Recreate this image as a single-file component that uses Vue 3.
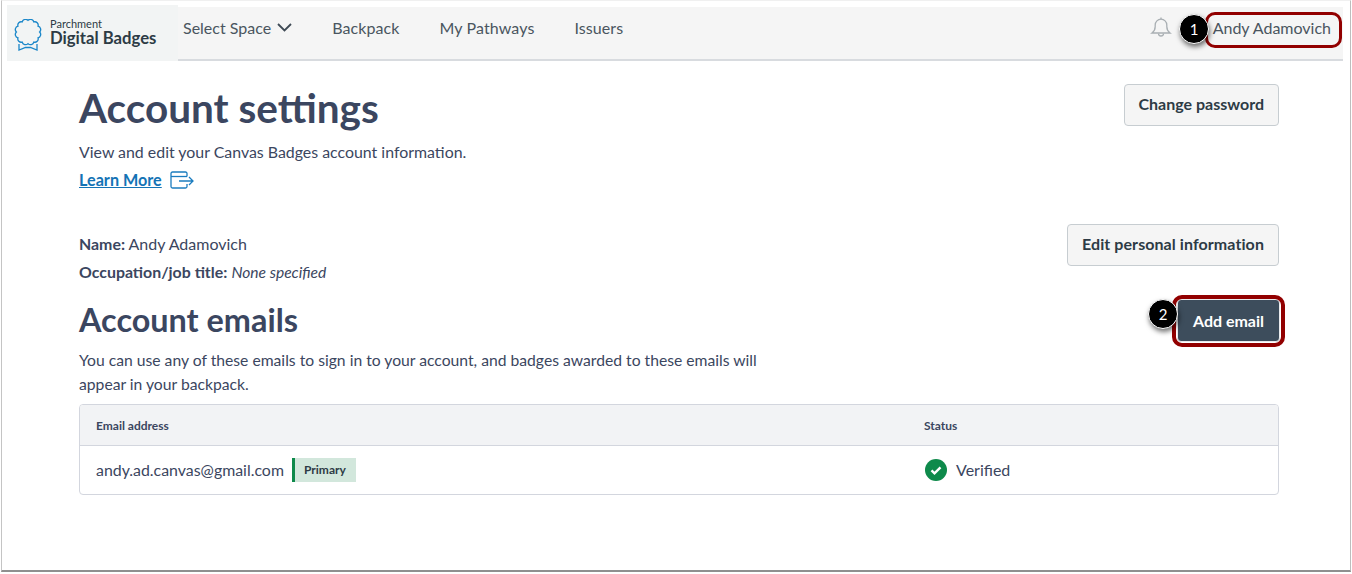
<script setup>
const navItems = ['Backpack', 'My Pathways', 'Issuers']

// Scalloped outline of the badge seal: twelve arcs round a circle.
const cx = 14
const cy = 13
const r = 11.6
const n = 12
const pts = Array.from({ length: n }, (_, i) => {
  const a = (i / n) * Math.PI * 2 - Math.PI / 2
  return [(cx + r * Math.cos(a)).toFixed(2), (cy + r * Math.sin(a)).toFixed(2)]
})
const sealPath =
  `M${pts[0].join(' ')}` +
  pts.slice(1).concat([pts[0]]).map((p) => `A3.4 3.4 0 0 1 ${p.join(' ')}`).join('') +
  'Z'
</script>

<template>
  <div class="shot">
    <div class="frame">
      <header class="nav">
        <div class="logo">
          <svg class="seal" width="28" height="32" viewBox="0 0 28 32" fill="none" stroke="#1b87c9" stroke-width="1.3">
            <path :d="sealPath" />
            <path d="M5 25v6l6.500-2.500h5L23 31v-6" />
          </svg>
          <div class="wordmark">
            <span class="wm-small">Parchment</span>
            <span class="wm-big">Digital Badges</span>
          </div>
        </div>
        <nav class="links">
          <a class="link select">Select Space
            <svg width="15" height="9" viewBox="0 0 15 9" fill="none" stroke="#3f4a55" stroke-width="1.800"><path d="M1 1l6.500 6.500L14 1"/></svg>
          </a>
          <a v-for="item in navItems" :key="item" class="link">{{ item }}</a>
        </nav>
        <div class="right">
          <svg class="bell" width="22" height="22" viewBox="0 0 22 22" fill="none" stroke="#a9afb3" stroke-width="1.300">
            <path d="M2 17c2-1.500 3.200-3.500 3.200-6.500V9a5.800 5.800 0 0 1 11.600 0v1.500c0 3 1.200 5 3.200 6.500z"/>
            <path d="M8.500 17.500a2.500 2.500 0 0 0 5 0"/>
            <path d="M11 3.200V1.500"/>
          </svg>
          <span class="user">Andy Adamovich</span>
        </div>
      </header>

      <main class="content">
        <section class="head-row">
          <div>
            <h1>Account settings</h1>
            <p class="intro">View and edit your Canvas Badges account information.</p>
            <p class="learn">
              <a>Learn More</a>
              <svg width="24" height="18" viewBox="0 0 24 18" fill="none" stroke="#1b7cbf" stroke-width="1.300">
                <path d="M17 5.500V2.500a1.500 1.500 0 0 0-1.500-1.500h-13A1.500 1.500 0 0 0 1 2.500v13A1.500 1.500 0 0 0 2.500 17h13a1.500 1.500 0 0 0 1.500-1.500V13"/>
                <path d="M1 5.500h16"/>
                <path d="M9 10h14M19 6l4 4-4 4"/>
              </svg>
            </p>
          </div>
          <button class="btn">Change password</button>
        </section>

        <section class="info-row">
          <div class="info">
            <p><b>Name:</b> Andy Adamovich</p>
            <p><b>Occupation/job title:</b> <i>None specified</i></p>
          </div>
          <button class="btn wide">Edit personal information</button>
        </section>

        <section class="emails-head">
          <div>
            <h2>Account emails</h2>
            <p class="desc">You can use any of these emails to sign in to your account, and badges awarded to these emails will appear in your backpack.</p>
          </div>
          <button class="btn dark">Add email</button>
        </section>

        <div class="table">
          <div class="tr th">
            <span class="c1">Email address</span>
            <span class="c2">Status</span>
          </div>
          <div class="tr td">
            <span class="c1 email">andy.ad.canvas@gmail.com <span class="tag">Primary</span></span>
            <span class="c2 status">
              <svg width="22" height="22" viewBox="0 0 22 22"><circle cx="11" cy="11" r="11" fill="#0e8a4b"/><path d="M6.500 11.300l3 3 6-6" fill="none" stroke="#fff" stroke-width="2.400"/></svg>
              Verified
            </span>
          </div>
        </div>
      </main>
    </div>

    <div class="ring ring-user"></div>
    <div class="ring ring-add"></div>
    <div class="marker m1">1</div>
    <div class="marker m2">2</div>
  </div>
</template>

<style>
html, body { margin: 0; background: #fff; }
</style>

<style scoped>
.shot {
  position: relative;
  width: 1352px;
  height: 574px;
  overflow: hidden;
  background: #fff;
  font-family: Lato, "Liberation Sans", sans-serif;
  color: #3b4660;
}
.frame {
  box-sizing: border-box;
  width: 1350px;
  height: 572px;
  margin-left: 1px;
  padding-top: 6px;
  border-left: 1px solid #c4c4c4;
  border-right: 1px solid #bdbdbd;
  border-bottom: 2px solid #8f8f8f;
  border-top: 1px solid #f0f0f0;
}
.nav {
  display: flex;
  align-items: center;
  height: 54px;
  margin-left: 5px;
  margin-right: 7px;
  box-sizing: border-box;
  background: #f5f5f5;
  border-bottom: 2px solid #d8dbdf;
}
.logo {
  display: flex;
  align-items: center;
  gap: 8px;
  box-sizing: border-box;
  width: 171px;
  height: 56px;
  padding-left: 7px;
  background: #f2f4f4;
}
.seal { margin-top: 3px; }
.wordmark { display: flex; flex-direction: column; gap: 1px; color: #2d3b45; padding-bottom: 2px; }
.wm-small { font-size: 11px; line-height: 11px; }
.wm-big { font-size: 16.7px; line-height: 17px; font-weight: 700; white-space: nowrap; }
.links { display: flex; align-items: center; gap: 40px; margin-left: 5px; padding-bottom: 12px; }
.link { font-size: 16px; color: #4a5560; letter-spacing: .1px; }
.select { display: flex; align-items: center; gap: 6px; letter-spacing: 0; }
.right { margin-left: auto; display: flex; align-items: center; margin-right: 12px; padding-bottom: 12px; }
.bell { margin-right: 41px; }
.user { font-size: 16px; color: #4a5560; }

.content { padding: 0 71px 0 77px; }
.head-row { display: flex; justify-content: space-between; align-items: flex-start; padding-top: 22px; }
h1 { margin: 0; font-size: 40.5px; line-height: 50px; font-weight: 700; }
.intro { margin: 7px 0 0; font-size: 15.9px; line-height: 24px; }
.learn { display: flex; align-items: center; gap: 8px; margin: 4px 0 0; font-size: 16.2px; line-height: 24px; }
.learn a { color: #1473b5; font-weight: 700; text-decoration: underline; }
.btn {
  box-sizing: border-box;
  height: 42px;
  padding: 0 14px 3px;
  margin-top: 1px;
  background: #f5f5f5;
  border: 1px solid #c7cdd1;
  border-radius: 4px;
  font: 700 16px Lato, "Liberation Sans", sans-serif;
  color: #2d3b45;
}
.wide { width: 212px; padding: 0 0 3px; letter-spacing: .08px; }
.dark {
  background: #3d4d5c;
  color: #fff;
  border: 1px solid #e8eaec;
  height: 43px;
  width: 103px;
  padding: 0;
  margin: -1px -1px 0 0;
}
.info-row { display: flex; justify-content: space-between; align-items: flex-start; margin-top: 31px; }
.info p { margin: 0; font-size: 16px; line-height: 28px; }
.info b { font-size: 15.9px; }
.info i { font-size: 15.6px; }
.info { margin-top: 7px; }
.emails-head { display: flex; justify-content: space-between; align-items: flex-start; margin-top: 14px; }
.emails-head > div { width: 700px; }
h2 { margin: 0; font-size: 32.4px; line-height: 40px; font-weight: 700; }
.desc { margin: 8px 0 0; font-size: 15.7px; line-height: 24px; }
.table { margin-top: 8px; border: 1px solid #d3d6de; border-radius: 4px; overflow: hidden; }
.tr { display: flex; align-items: center; padding-left: 16px; }
.th { height: 40px; background: #f2f3f5; border-bottom: 1px solid #d3d6de; font-size: 12px; font-weight: 700; }
.td { box-sizing: border-box; height: 48px; padding-bottom: 1px; font-size: 16px; }
.c1 { width: 828px; }
.email { display: flex; align-items: center; white-space: pre; font-size: 15.9px; }
.tag {
  box-sizing: border-box;
  height: 24px;
  margin-left: 4px;
  padding: 0 10px 0 9px;
  border-left: 3px solid #0e8a4b;
  background: #d2e7dc;
  font-size: 12px;
  font-weight: 700;
  line-height: 24px;
  color: #2d3b45;
}
.status { display: flex; align-items: center; gap: 9px; padding-left: 1px; }

.ring { position: absolute; box-sizing: border-box; border: 3px solid #920000; }
.ring-user { left: 1205px; top: 12px; width: 137px; height: 36px; border-radius: 10px; }
.ring-add { left: 1172px; top: 295px; width: 113px; height: 52px; border-radius: 10px; border-width: 4px; }
.marker {
  position: absolute;
  width: 30px;
  height: 30px;
  border-radius: 50%;
  border: 1px solid #fff;
  box-sizing: border-box;
  background: #000;
  color: #fff;
  font: 15px/28px Lato, "Liberation Sans", sans-serif;
  text-align: center;
  box-shadow: 1px 3px 5px rgba(0, 0, 0, .55);
}
.m1 { left: 1179px; top: 14px; }
.m2 { left: 1148px; top: 299px; }
</style>
